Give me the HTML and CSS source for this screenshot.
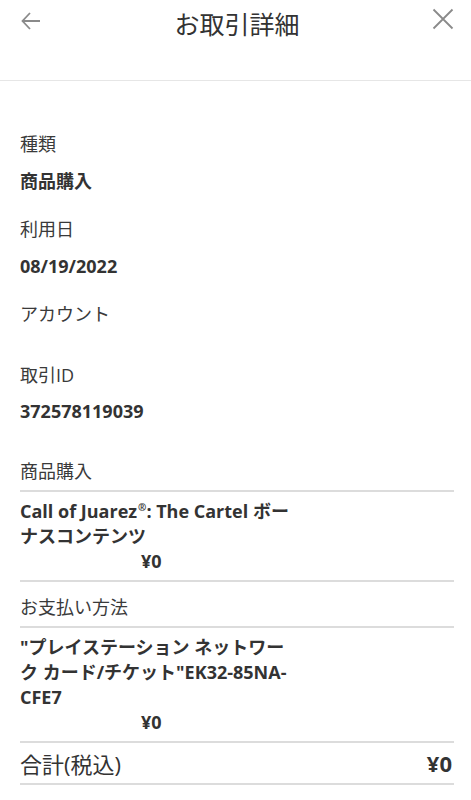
FILE: index.html
```html
<!DOCTYPE html>
<html lang="ja">
<head>
<meta charset="utf-8">
<link rel="stylesheet" href="styles.css">
</head>
<body>
<header class="topbar">
  <button class="icon-btn back" aria-label="戻る">
    <svg width="22" height="22" viewBox="0 0 22 22"><path d="M20 11H3M10 3L2.5 11 10 19" fill="none" stroke="#8a8a8a" stroke-width="1.8"/></svg>
  </button>
  <h1 class="title">お取引詳細</h1>
  <button class="icon-btn close" aria-label="閉じる">
    <svg width="22" height="22" viewBox="0 0 22 22"><path d="M1.5 1.5L20.5 20.5M20.5 1.5L1.5 20.5" fill="none" stroke="#8a8a8a" stroke-width="1.8"/></svg>
  </button>
</header>
<main class="content">
  <div class="field">
    <div class="label">種類</div>
    <div class="value">商品購入</div>
  </div>
  <div class="field">
    <div class="label">利用日</div>
    <div class="value">08/19/2022</div>
  </div>
  <div class="field">
    <div class="label">アカウント</div>
    <div class="value empty"></div>
  </div>
  <div class="field last">
    <div class="label">取引ID</div>
    <div class="value">372578119039</div>
  </div>

  <section class="group">
    <div class="group-head">商品購入</div>
    <div class="item">
      <div class="item-name">Call of Juarez<sup>®</sup>: The Cartel ボーナスコンテンツ</div>
      <div class="item-price">¥0</div>
    </div>
  </section>
  <section class="group">
    <div class="group-head">お支払い方法</div>
    <div class="item">
      <div class="item-name">"プレイステーション ネットワーク カード/チケット"EK32-85NA-CFE7</div>
      <div class="item-price">¥0</div>
    </div>
  </section>
  <div class="total">
    <span class="total-label">合計(税込)</span>
    <span class="total-value">¥0</span>
  </div>
</main>
</body>
</html>
```
FILE: styles.css
```css
* { box-sizing: border-box; }
html, body { margin: 0; padding: 0; background: #fff; }
body {
  font-family: "Open Sans", "Noto Sans CJK JP", sans-serif;
  color: #333;
  width: 471px;
}
.topbar {
  height: 81px;
  border-bottom: 1px solid #e6e6e6;
  display: flex;
  align-items: flex-start;
  justify-content: space-between;
  padding: 0 17px 0 20px;
}
.icon-btn {
  background: none;
  border: 0;
  padding: 0;
  width: 22px;
  height: 22px;
  display: flex;
}
.back { margin-top: 10px; }
.close { margin-top: 8px; }
.title {
  margin: 0;
  margin-top: 7px;
  font-size: 25px;
  font-weight: 400;
  line-height: 32px;
  color: #333;
  font-family: "Noto Sans CJK JP", sans-serif;
}
.content {
  padding: 50px 17px 0 20px;
}
.field { margin-bottom: 22px; }
.field.last { margin-bottom: 34px; }
.label {
  font-size: 18px;
  line-height: 26px;
  color: #3a3a3a;
}
.value {
  margin-top: 11px;
  font-size: 18px;
  font-weight: 700;
  line-height: 26px;
  color: #333;
}
.value.empty { height: 2px; }
.field.last .value { margin-top: 10px; }
.group-head {
  font-size: 18px;
  line-height: 26px;
  color: #3a3a3a;
  padding: 0 0 6px;
  border-bottom: 2px solid #dcdcdc;
}
.group + .group .group-head { padding-top: 12px; }
.item {
  padding: 7px 0 6px;
  border-bottom: 2px solid #dcdcdc;
}
.item-name {
  width: 274px;
  font-size: 18px;
  font-weight: 700;
  line-height: 25px;
}
.item-name sup {
  font-size: 10px;
  line-height: 0;
  vertical-align: 7px;
  margin-left: 1px;
}
.item-price {
  padding-left: 121px;
  font-size: 18px;
  font-weight: 700;
  line-height: 25px;
}
.total {
  display: flex;
  justify-content: space-between;
  align-items: center;
  height: 42px;
  border-bottom: 2px solid #dcdcdc;
}
.total-label {
  font-size: 22px;
  color: #333;
}
.total-value {
  font-size: 22px;
  font-weight: 700;
  margin-right: 2px;
}
```
